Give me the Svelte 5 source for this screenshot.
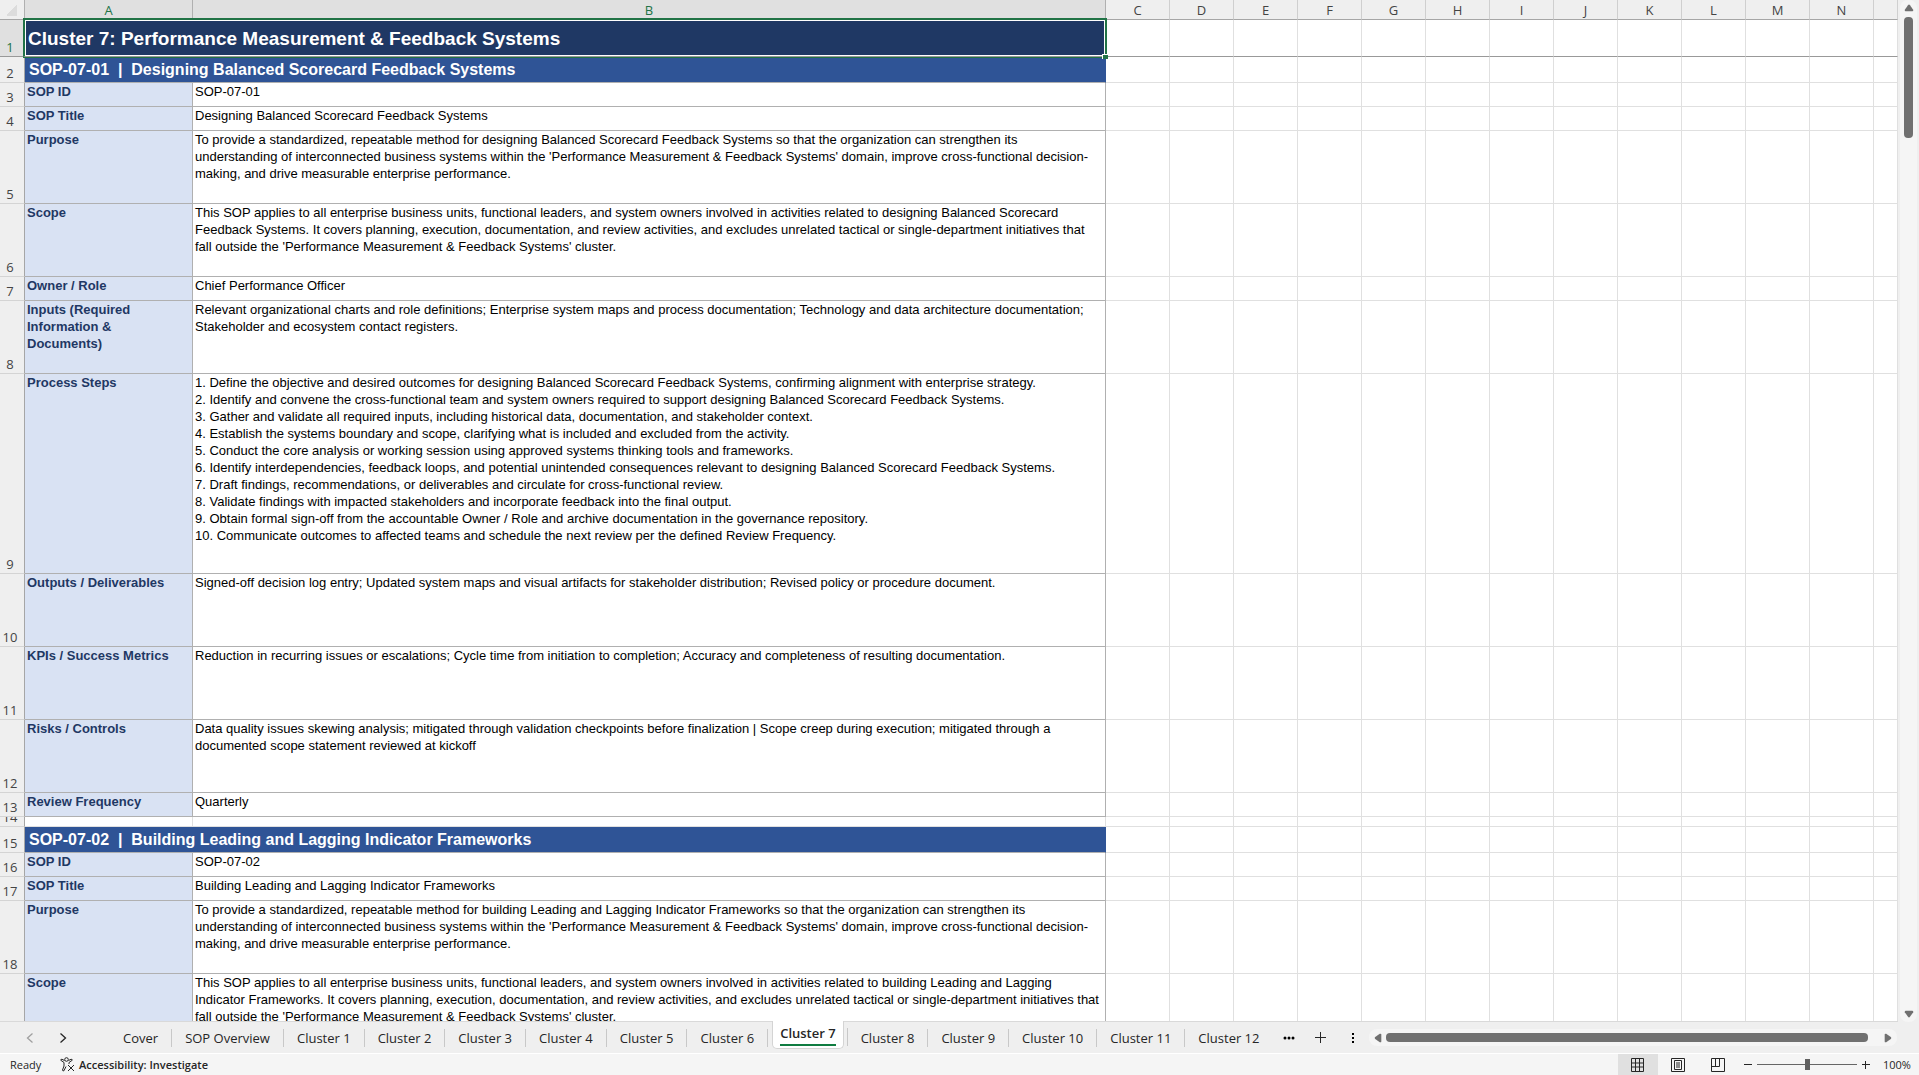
<script lang="ts">
	type Row = { h: number; kind: string; label?: string; text?: string };

	const columns = ['C', 'D', 'E', 'F', 'G', 'H', 'I', 'J', 'K', 'L', 'M', 'N'];

	// heights are in px, the same way the sheet stores its row sizes
	const rows: Row[] = [
		{ h: 37, kind: 'title', label: 'Cluster 7: Performance Measurement & Feedback Systems' },
		{ h: 26, kind: 'section', label: 'SOP-07-01  |  Designing Balanced Scorecard Feedback Systems' },
		{ h: 24, kind: 'field', label: 'SOP ID', text: 'SOP-07-01' },
		{ h: 24, kind: 'field', label: 'SOP Title', text: 'Designing Balanced Scorecard Feedback Systems' },
		{
			h: 73,
			kind: 'field',
			label: 'Purpose',
			text: `To provide a standardized, repeatable method for designing Balanced Scorecard Feedback Systems so that the organization can strengthen its
understanding of interconnected business systems within the 'Performance Measurement & Feedback Systems' domain, improve cross-functional decision-
making, and drive measurable enterprise performance.`
		},
		{
			h: 73,
			kind: 'field',
			label: 'Scope',
			text: `This SOP applies to all enterprise business units, functional leaders, and system owners involved in activities related to designing Balanced Scorecard
Feedback Systems. It covers planning, execution, documentation, and review activities, and excludes unrelated tactical or single-department initiatives that
fall outside the 'Performance Measurement & Feedback Systems' cluster.`
		},
		{ h: 24, kind: 'field', label: 'Owner / Role', text: 'Chief Performance Officer' },
		{
			h: 73,
			kind: 'field',
			label: 'Inputs (Required\nInformation &\nDocuments)',
			text: `Relevant organizational charts and role definitions; Enterprise system maps and process documentation; Technology and data architecture documentation;
Stakeholder and ecosystem contact registers.`
		},
		{
			h: 200,
			kind: 'field',
			label: 'Process Steps',
			text: `1. Define the objective and desired outcomes for designing Balanced Scorecard Feedback Systems, confirming alignment with enterprise strategy.
2. Identify and convene the cross-functional team and system owners required to support designing Balanced Scorecard Feedback Systems.
3. Gather and validate all required inputs, including historical data, documentation, and stakeholder context.
4. Establish the systems boundary and scope, clarifying what is included and excluded from the activity.
5. Conduct the core analysis or working session using approved systems thinking tools and frameworks.
6. Identify interdependencies, feedback loops, and potential unintended consequences relevant to designing Balanced Scorecard Feedback Systems.
7. Draft findings, recommendations, or deliverables and circulate for cross-functional review.
8. Validate findings with impacted stakeholders and incorporate feedback into the final output.
9. Obtain formal sign-off from the accountable Owner / Role and archive documentation in the governance repository.
10. Communicate outcomes to affected teams and schedule the next review per the defined Review Frequency.`
		},
		{
			h: 73,
			kind: 'field',
			label: 'Outputs / Deliverables',
			text: 'Signed-off decision log entry; Updated system maps and visual artifacts for stakeholder distribution; Revised policy or procedure document.'
		},
		{
			h: 73,
			kind: 'field',
			label: 'KPIs / Success Metrics',
			text: 'Reduction in recurring issues or escalations; Cycle time from initiation to completion; Accuracy and completeness of resulting documentation.'
		},
		{
			h: 73,
			kind: 'field',
			label: 'Risks / Controls',
			text: `Data quality issues skewing analysis; mitigated through validation checkpoints before finalization | Scope creep during execution; mitigated through a
documented scope statement reviewed at kickoff`
		},
		{ h: 24, kind: 'field', label: 'Review Frequency', text: 'Quarterly' },
		{ h: 10, kind: 'blank' },
		{ h: 26, kind: 'section', label: 'SOP-07-02  |  Building Leading and Lagging Indicator Frameworks' },
		{ h: 24, kind: 'field', label: 'SOP ID', text: 'SOP-07-02' },
		{ h: 24, kind: 'field', label: 'SOP Title', text: 'Building Leading and Lagging Indicator Frameworks' },
		{
			h: 73,
			kind: 'field',
			label: 'Purpose',
			text: `To provide a standardized, repeatable method for building Leading and Lagging Indicator Frameworks so that the organization can strengthen its
understanding of interconnected business systems within the 'Performance Measurement & Feedback Systems' domain, improve cross-functional decision-
making, and drive measurable enterprise performance.`
		},
		{
			h: 73,
			kind: 'field',
			label: 'Scope',
			text: `This SOP applies to all enterprise business units, functional leaders, and system owners involved in activities related to building Leading and Lagging
Indicator Frameworks. It covers planning, execution, documentation, and review activities, and excludes unrelated tactical or single-department initiatives that
fall outside the 'Performance Measurement & Feedback Systems' cluster.`
		}
	];

	const sheets = ['Cover', 'SOP Overview', ...Array.from({ length: 12 }, (_, i) => `Cluster ${i + 1}`)];

	let active = $state('Cluster 7');
	let zoom = $state(100);
</script>

<div class="app">
	<div class="grid-area">
		<div class="sheet">
			<table>
				<colgroup>
					<col class="col-num" />
					<col class="col-a" />
					<col class="col-b" />
					{#each columns as c (c)}
						<col class="col-std" />
					{/each}
					<col />
				</colgroup>
				<thead>
					<tr>
						<th class="corner" aria-label="Select all"></th>
						<th class="selected">A</th>
						<th class="selected">B</th>
						{#each columns as c (c)}
							<th>{c}</th>
						{/each}
						<th></th>
					</tr>
				</thead>
				<tbody>
					{#each rows as row, i}
						<tr class={row.kind} style="height: {row.h}px">
							<th class="num" class:selected={i === 0}><span>{i + 1}</span></th>
							{#if row.kind === 'title' || row.kind === 'section'}
								<td class="banner" colspan="2">
									{row.label}
									{#if row.kind === 'title'}
										<div class="selection"><i></i></div>
									{/if}
								</td>
							{:else}
								<td class="label">{row.label}</td>
								<td class="text">{row.text}</td>
							{/if}
							{#each columns as c (c)}
								<td></td>
							{/each}
							<td></td>
						</tr>
					{/each}
				</tbody>
			</table>
		</div>
		<div class="vscroll">
			<button aria-label="Scroll up">
				<svg width="10" height="8" viewBox="0 0 10 8"><path d="M4 1.2Q5 0 6 1.2L9.2 5.8Q9.6 7.3 8.4 7.3H1.6Q.4 7.3.8 5.8Z" /></svg>
			</button>
			<div class="vthumb"></div>
			<button class="down" aria-label="Scroll down">
				<svg width="10" height="8" viewBox="0 0 10 8"><path d="M4 6.8Q5 8 6 6.8L9.2 2.2Q9.6.7 8.4.7H1.6Q.4.7.8 2.2Z" /></svg>
			</button>
		</div>
	</div>

	<div class="tabbar">
		<div class="arrows">
			<button class="off" aria-label="Previous sheets">
				<svg width="8" height="12" viewBox="0 0 8 12"><path d="M6.5 1.5 1.5 6l5 4.5" /></svg>
			</button>
			<button aria-label="Next sheets">
				<svg width="8" height="12" viewBox="0 0 8 12"><path d="m1.500 1.500 5 4.500-5 4.500" /></svg>
			</button>
		</div>
		<div class="tabs">
			{#each sheets as name (name)}
				<button class="tab" class:active={active === name} onclick={() => (active = name)}>
					<span>{name}</span>
				</button>
			{/each}
		</div>
		<button class="more" aria-label="More sheets">
			<svg width="12" height="4" viewBox="0 0 12 4"><circle cx="2" cy="2" r="1.500" /><circle cx="6" cy="2" r="1.500" /><circle cx="10" cy="2" r="1.500" /></svg>
		</button>
		<button class="add" aria-label="New sheet">
			<svg width="11" height="11" viewBox="0 0 11 11"><path d="M5.500 0v11M0 5.500h11" /></svg>
		</button>
		<button class="grip" aria-label="Resize tab bar">
			<svg width="2" height="12" viewBox="0 0 2 12"><path d="M0 1h2v2H0zM0 5h2v2H0zM0 9h2v2H0z" /></svg>
		</button>
		<div class="hscroll">
			<button aria-label="Scroll left">
				<svg width="8" height="10" viewBox="0 0 8 10"><path d="M1.200 4Q0 5 1.200 6L5.800 9.200Q7.300 9.600 7.300 8.400V1.600Q7.300.4 5.800.8Z" /></svg>
			</button>
			<div class="hthumb"></div>
			<button aria-label="Scroll right">
				<svg width="8" height="10" viewBox="0 0 8 10"><path d="M6.800 4Q8 5 6.800 6L2.200 9.200Q.7 9.600.7 8.400V1.600Q.7.4 2.200.8Z" /></svg>
			</button>
		</div>
	</div>

	<div class="statusbar">
		<span class="ready">Ready</span>
		<button class="access">
			<svg width="15" height="15" viewBox="0 0 15 15">
				<circle cx="6.500" cy="2.500" r="1.800" />
				<path d="M4.500 3.500 2 2.300Q.8 2 .7 3.200L4 5.500V9L2.500 13q.2 1.300 1.400.8L6 9.500M8.500 3.500 11 2.300q1.200-.3 1.300.9L9 5.500V7M8 8l6 6M14 8l-6 6" />
			</svg>
			Accessibility: Investigate
		</button>
		<div class="views">
			<button class="on" aria-label="Normal view">
				<svg width="14" height="14" viewBox="0 0 14 14"><path d="M.5.5h12v13H.5zM.5 5h12M.5 9h12M4.500.5v13M8.500.5v13" /></svg>
			</button>
			<button aria-label="Page layout view">
				<svg width="14" height="14" viewBox="0 0 14 14"><path d="M.5.5h13v13H.5zM3.500 2.500h7v9h-7zM5 5h4M5 7h4M5 9h4" /></svg>
			</button>
			<button aria-label="Page break preview">
				<svg width="14" height="14" viewBox="0 0 14 14"><path d="M.5.5h13v13H.5zM.5 8.500h8V.5M4.500.5v8" /></svg>
			</button>
		</div>
		<button class="step" aria-label="Zoom out" onclick={() => (zoom -= 10)}>
			<svg width="8" height="8" viewBox="0 0 8 8"><path d="M0 3.500h8" /></svg>
		</button>
		<input type="range" min="0" max="200" bind:value={zoom} aria-label="Zoom" />
		<button class="step" aria-label="Zoom in" onclick={() => (zoom += 10)}>
			<svg width="8" height="8" viewBox="0 0 8 8"><path d="M0 3.500h8M3.500 0v8" /></svg>
		</button>
		<span class="pct">{zoom}%</span>
	</div>
</div>

<style>
	:global(body) {
		margin: 0;
		background: #efefef;
	}

	.app {
		display: flex;
		flex-direction: column;
		height: 100vh;
		overflow: hidden;
		font-family: 'Open Sans', 'Noto Sans', sans-serif;
		color: #262626;
	}

	button {
		all: unset;
		box-sizing: border-box;
		display: flex;
		align-items: center;
		justify-content: center;
		cursor: pointer;
	}

	svg {
		display: block;
	}

	/* sheet */
	.grid-area {
		display: flex;
		flex: 1;
		min-height: 0;
	}

	.sheet {
		flex: 1;
		min-width: 0;
		overflow: hidden;
		background: #fff;
		border-bottom: 1px solid #d9d9d9;
	}

	table {
		width: 100%;
		table-layout: fixed;
		border-collapse: separate;
		border-spacing: 0;
	}

	.col-num {
		width: 25px;
	}

	.col-a {
		width: 168px;
	}

	.col-b {
		width: 913px;
	}

	.col-std {
		width: 64px;
	}

	th,
	td {
		box-sizing: border-box;
		padding: 0;
		border-right: 1px solid #e0e0e0;
		border-bottom: 1px solid #e0e0e0;
	}

	th {
		background: #efefef;
		color: #444;
		font-size: 13px;
		font-weight: 400;
	}

	thead th {
		height: 20px;
		padding-top: 2px;
		line-height: 17px;
		border-right-color: #cfcfcf;
		border-bottom-color: #a6a6a6;
	}

	th.selected {
		background: #e0e0e0;
		color: #217346;
		border-right-color: #b0b0b0;
	}

	.corner {
		background: linear-gradient(135deg, transparent 50%, #dcdcdc 50%) 7px 4px / 10px 12px no-repeat #efefef;
		border-right-color: #b0b0b0;
	}

	.num {
		position: relative;
		overflow: hidden;
		border-right-color: #a6a6a6;
		border-bottom-color: #d4d4d4;
	}

	.num span {
		position: absolute;
		right: 4px;
		bottom: 1px;
		left: 0;
		line-height: 16px;
	}

	.title td,
	.title th {
		border-bottom-color: #999;
	}

	td {
		font-family: 'Liberation Sans', Arial, sans-serif;
		font-size: 13px;
		line-height: 17px;
		white-space: pre;
	}

	.banner {
		position: relative;
		background: #2f5496;
		border-right-color: #2f5496;
		border-bottom-color: #b0b0b0;
		color: #fff;
		font-size: 16px;
		font-weight: 700;
		padding-left: 4px;
	}

	.title .banner {
		z-index: 1;
		background: #1f3864;
		font-size: 19px;
		padding-left: 3px;
	}

	/* the freeze line runs between the last two pixels of the frame */
	.selection {
		position: absolute;
		inset: -2px -2px -1px -2px;
		border: 2px solid #217346;
		border-bottom: 1px solid #999;
		box-shadow:
			inset 0 0 0 1px #fff,
			0 1px 0 #217346;
	}

	.selection i {
		position: absolute;
		right: -3px;
		bottom: -3px;
		width: 5px;
		height: 4px;
		background: #217346;
		border-top: 1px solid #fff;
		border-left: 1px solid #fff;
	}

	.field .label,
	.field .text {
		vertical-align: top;
		border-right-color: #b0b0b0;
		border-bottom-color: #b0b0b0;
	}

	.label,
	.text {
		padding-left: 2px;
	}

	.field .label {
		background: #d9e2f3;
		color: #1f3864;
		font-weight: 700;
	}

	.text {
		color: #000;
	}

	/* vertical scrollbar */
	.vscroll {
		display: flex;
		flex-direction: column;
		align-items: center;
		width: 17px;
		margin: 0 2px;
		padding: 4px 0;
		box-sizing: border-box;
		background: #f5f5f5;
		border-radius: 8px;
	}

	.vscroll svg,
	.hscroll svg {
		fill: #707070;
	}

	.vthumb {
		width: 9px;
		height: 121px;
		margin-top: 5px;
		border-radius: 4px;
		background: #707070;
	}

	.down {
		margin-top: auto;
	}

	/* sheet tabs */
	.tabbar {
		display: flex;
		align-items: center;
		height: 31px;
		background: #efefef;
		border-bottom: 1px solid #fff;
	}

	.arrows {
		display: flex;
		gap: 25px;
		width: 110px;
		padding-left: 26px;
		box-sizing: border-box;
	}

	.arrows svg,
	.add svg {
		fill: none;
		stroke: #262626;
		stroke-width: 1.3;
	}

	.add svg {
		stroke-width: 1;
	}

	.arrows .off svg {
		stroke: #a0a0a0;
	}

	.tabs {
		display: flex;
		align-self: stretch;
	}

	.tab {
		position: relative;
		padding: 0 14px 0 13px;
		font-size: 13px;
		white-space: nowrap;
	}

	.tab::after {
		content: '';
		position: absolute;
		right: 0;
		top: 7px;
		height: 18px;
		border-right: 1px solid #c8c8c8;
	}

	.tab:last-child::after {
		display: none;
	}

	.tab.active {
		height: 28px;
		padding: 0 7px;
		margin: -1px 4px 0;
		background: #fff;
		border: 1px solid #d4d4d4;
		border-top: 0;
		border-radius: 0 0 5px 5px;
		font-weight: 600;
	}

	.tab.active span {
		line-height: 21px;
		border-bottom: 2px solid #107c41;
	}

	.tab.active::after {
		right: -5px;
	}

	.more {
		margin-left: 9px;
	}

	.add {
		margin-left: 20px;
	}

	.grip {
		margin-left: 26px;
	}

	.hscroll {
		display: flex;
		flex: 1;
		align-items: center;
		height: 17px;
		margin: 0 22px 0 15px;
		padding: 0 5px;
		background: #f5f5f5;
		border-radius: 8px;
	}

	.hthumb {
		flex: 1;
		height: 9px;
		margin: 0 16px 0 4px;
		border-radius: 4px;
		background: #707070;
	}

	/* status bar */
	.statusbar {
		display: flex;
		align-items: center;
		height: 21px;
		background: #f5f5f5;
		font-size: 11px;
	}

	.ready {
		width: 50px;
		padding-left: 10px;
	}

	.access {
		gap: 4px;
		font-weight: 600;
	}

	.statusbar svg {
		fill: none;
		stroke: #262626;
	}

	.views {
		display: flex;
		align-self: stretch;
		margin: 0 6px 0 auto;
	}

	.views button {
		width: 40px;
	}

	.views .on {
		background: #e0e0e0;
	}

	input {
		appearance: none;
		width: 100px;
		height: 14px;
		margin: 0 5px;
		background: linear-gradient(#666, #666) center / 100% 1px no-repeat;
	}

	input::-webkit-slider-thumb {
		appearance: none;
		width: 5px;
		height: 11px;
		background: #606060;
	}

	.pct {
		width: 36px;
		padding-left: 13px;
	}
</style>
